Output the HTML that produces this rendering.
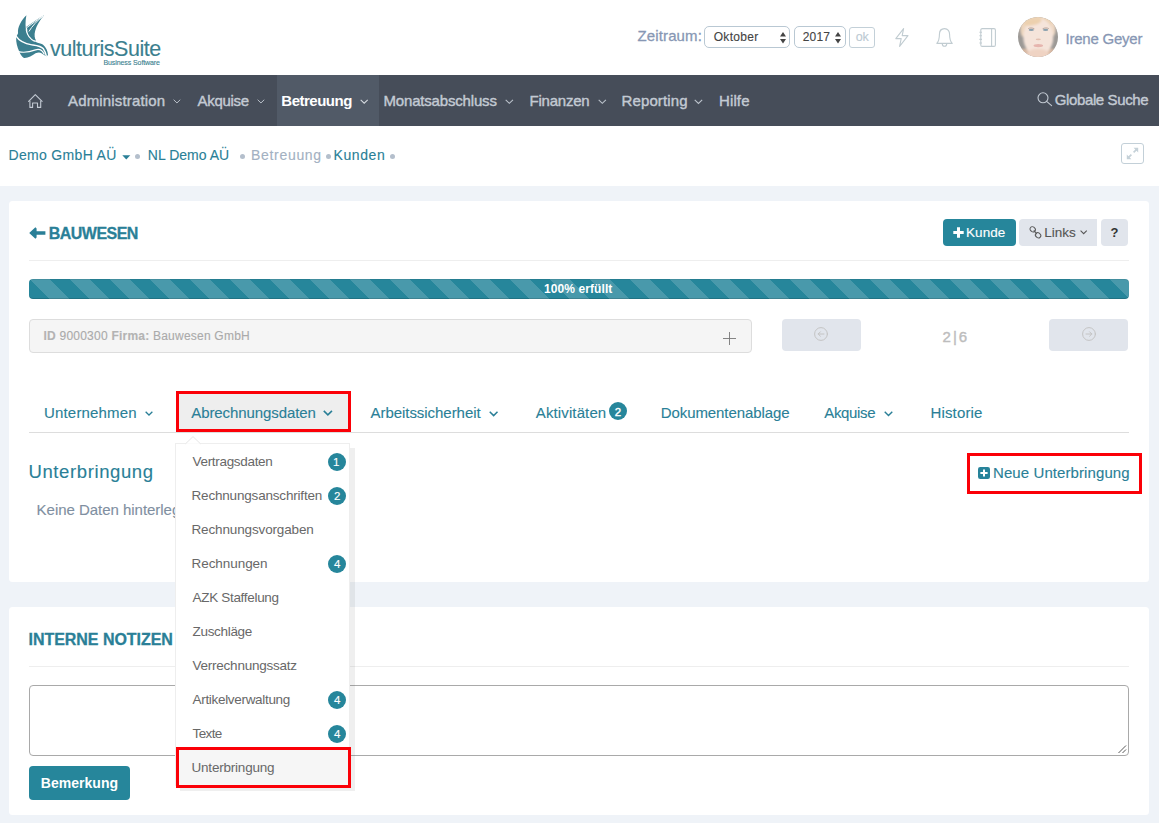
<!DOCTYPE html>
<html lang="de">
<head>
<meta charset="utf-8">
<title>vulturisSuite – Kunden – Bauwesen</title>
<style>
*{box-sizing:border-box;margin:0;padding:0}
html,body{width:1159px;height:823px;overflow:hidden;background:#eff3f8}
body{font-family:"Liberation Sans",sans-serif;position:relative;color:#333}
.abs{position:absolute}
.t{position:absolute;white-space:nowrap;line-height:1;display:block}
.sb{-webkit-text-stroke:0.35px currentColor}
#top{left:0;top:0;width:1159px;height:75px;background:#fff}
#nav{left:0;top:75px;width:1159px;height:51px;background:#464d59}
#navact{left:277px;top:75px;width:102px;height:51px;background:#515a67}
#crumbs{left:0;top:126px;width:1159px;height:60px;background:#fff}
.card{background:#fff;border-radius:3.5px}
#card1{left:9px;top:201px;width:1140px;height:381px}
#card2{left:9px;top:607px;width:1140px;height:208px}
.hr{height:1px;background:#eee;left:29px;width:1100px}
.sel{border:1px solid #b9c8d3;border-radius:5px;background:#fff;height:22px;top:26px}
.btn{border-radius:4px}
.red{border:3px solid #fb0007;position:absolute}
.badge{position:absolute;width:18px;height:18px;border-radius:9px;background:#26869b}
.dot{position:absolute;width:5px;height:5px;border-radius:3px;background:#b4bfcc}
svg{position:absolute;overflow:visible}
</style>
</head>
<body>
<!-- top header -->
<div id="top" class="abs"></div>
<div id="nav" class="abs"></div>
<div id="navact" class="abs"></div>
<div id="crumbs" class="abs"></div>

<!-- logo -->
<svg id="logo" style="left:10px;top:8px" width="60" height="60" viewBox="0 0 823 823">
 <g fill="#3c7f8f">
  <path d="M225,100 C150,175 100,270 111,345 L85,398 C80,470 100,540 125,592 C145,640 165,670 192,686 C250,690 300,650 350,620 C400,598 435,610 462,642 C480,655 498,662 505,660 C512,655 520,648 521,640 C518,590 495,535 450,500 C420,485 385,482 355,466 C300,440 250,395 225,330 C210,270 208,180 225,100 Z"/>
  <path d="M466,98 C400,132 320,190 222,262 C238,275 240,300 236,330 C245,380 270,420 300,436 C320,444 340,448 358,447 C338,415 330,370 345,315 C365,240 415,155 466,98 Z"/>
 </g>
 <g fill="none" stroke="#fff" stroke-linecap="round">
  <path d="M86,388 C125,450 200,487 300,506 C375,516 425,520 458,560 C478,590 490,620 497,652" stroke-width="20"/>
  <path d="M116,598 C200,620 280,600 350,574 C400,558 440,572 468,632" stroke-width="16"/>
  <path d="M232,268 C300,220 370,165 440,118" stroke-width="13"/>
  <path d="M262,318 C300,250 375,175 450,112" stroke-width="13"/>
  <path d="M222,300 C235,370 265,420 335,455" stroke-width="14"/>
 </g>
</svg>

<!-- header controls -->
<div class="abs sel" style="left:704px;width:86px"></div>
<div class="abs sel" style="left:794px;width:52px"></div>
<svg style="left:779.5px;top:31.5px" width="6" height="12" viewBox="0 0 6 12"><path d="M3,0 L6,4.5 H0 Z M0,7 H6 L3,11.5 Z" fill="#444"/></svg>
<svg style="left:835.3px;top:31.5px" width="6" height="12" viewBox="0 0 6 12"><path d="M3,0 L6,4.5 H0 Z M0,7 H6 L3,11.5 Z" fill="#444"/></svg>
<div class="abs" style="left:849px;top:27px;width:26px;height:20.5px;border:1px solid #c3d0d8;border-radius:3px;background:#fff"></div>

<!-- header icons -->
<svg style="left:895px;top:28px" width="14" height="19" viewBox="0 0 14 19" fill="none" stroke="#c1ccd1" stroke-width="1.1" stroke-linejoin="round"><path d="M8.6,0.6 L0.8,10.6 H6.2 L4.6,18.4 L13,7.6 H7.2 Z"/></svg>
<svg style="left:936px;top:28px" width="17" height="19" viewBox="0 0 17 19" fill="none" stroke="#c1ccd1" stroke-width="1.1" stroke-linejoin="round"><path d="M8.5,0.6 C5,0.6 3.4,3.4 3.4,6.4 C3.4,11.5 2.4,13.6 0.8,15.4 H16.2 C14.6,13.6 13.6,11.5 13.6,6.4 C13.6,3.4 12,0.6 8.5,0.6 Z"/><path d="M6.2,15.6 C6.4,17.4 7.3,18.3 8.5,18.3 C9.7,18.3 10.6,17.4 10.8,15.6"/></svg>
<svg style="left:979px;top:28px" width="18" height="19" viewBox="0 0 18 19" fill="none" stroke="#c1ccd1" stroke-width="1.1" stroke-linejoin="round"><rect x="1.8" y="0.6" width="14.6" height="17.8" rx="1.4"/><path d="M12.6,0.6 V18.4"/><path d="M0.4,4.2 H3 M0.4,7.8 H3 M0.4,11.4 H3 M0.4,15 H3"/></svg>

<!-- avatar -->
<svg style="left:1017.8px;top:17px" width="40" height="40" viewBox="0 0 40 40">
 <defs>
  <clipPath id="avc"><circle cx="20" cy="20" r="20"/></clipPath>
  <filter id="avb" x="-30%" y="-30%" width="160%" height="160%"><feGaussianBlur stdDeviation="1.3"/></filter>
  <filter id="avs" x="-50%" y="-50%" width="200%" height="200%"><feGaussianBlur stdDeviation="0.75"/></filter>
 </defs>
 <g clip-path="url(#avc)">
  <rect width="40" height="40" fill="#9c9996"/>
  <g filter="url(#avb)">
   <rect x="-2" y="32" width="44" height="12" fill="#d9b9a3"/>
   <ellipse cx="20" cy="4" rx="17" ry="9" fill="#ecd3b6"/>
   <ellipse cx="5.5" cy="12" rx="3.2" ry="8" fill="#edd5bd"/>
   <ellipse cx="35" cy="12" rx="2.6" ry="7" fill="#eed8c4"/>
   <ellipse cx="20.3" cy="20" rx="15" ry="19" fill="#f5e4da"/>
   <ellipse cx="20" cy="37" rx="11" ry="5" fill="#efd3c3"/>
   <ellipse cx="15" cy="5" rx="9" ry="3.2" fill="#ecd0ae" transform="rotate(-14 15 5)"/>
  </g>
  <g filter="url(#avs)">
   <ellipse cx="13.3" cy="12.9" rx="2.6" ry="1.05" fill="#8ba1ae"/>
   <ellipse cx="27.6" cy="12.9" rx="2.6" ry="1.05" fill="#8ba1ae"/>
   <path d="M10.2,11.6 C12,10.6 14.6,10.7 16.4,11.8" stroke="#a58f85" stroke-width="0.7" fill="none"/>
   <path d="M24.6,11.8 C26.4,10.7 29,10.6 30.8,11.6" stroke="#a58f85" stroke-width="0.7" fill="none"/>
   <ellipse cx="20.3" cy="28.6" rx="4.8" ry="1.6" fill="#e6b5ae"/>
   <ellipse cx="20.3" cy="22.3" rx="2.6" ry="0.9" fill="#e3c0b1"/>
  </g>
 </g>
</svg>

<!-- nav icons -->
<svg style="left:28px;top:93px" width="15" height="16" viewBox="28 93 15 16" fill="none" stroke="#c2c9d2" stroke-width="1.1" stroke-linecap="round" stroke-linejoin="round"><path d="M28.6,101.4 L35.3,94.6 L42.1,101.4"/><path d="M29.9,101 V107.4 H32.6 V103 H37.5 V107.4 H40.7 V101"/></svg>
<svg style="left:1037px;top:92px" width="16" height="15" viewBox="0 0 16 15" fill="none" stroke="#c2c9d2" stroke-width="1.1" stroke-linecap="round"><circle cx="6" cy="5.8" r="5"/><path d="M9.6,9.4 L14.6,13.6"/></svg>
<svg style="left:173.30px;top:98.93px" width="7.90" height="4.74" viewBox="0 0 10 6"><path d="M0.8,0.9 L5,5 L9.2,0.9" fill="none" stroke="#bcc3cc" stroke-width="1.25"/></svg>
<svg style="left:257.30px;top:98.93px" width="7.90" height="4.74" viewBox="0 0 10 6"><path d="M0.8,0.9 L5,5 L9.2,0.9" fill="none" stroke="#bcc3cc" stroke-width="1.25"/></svg>
<svg style="left:359.80px;top:98.78px" width="8.40" height="5.04" viewBox="0 0 10 6"><path d="M0.8,0.9 L5,5 L9.2,0.9" fill="none" stroke="#d5dae0" stroke-width="1.25"/></svg>
<svg style="left:505.30px;top:98.70px" width="8.65" height="5.19" viewBox="0 0 10 6"><path d="M0.8,0.9 L5,5 L9.2,0.9" fill="none" stroke="#bcc3cc" stroke-width="1.25"/></svg>
<svg style="left:597.50px;top:98.72px" width="8.60" height="5.16" viewBox="0 0 10 6"><path d="M0.8,0.9 L5,5 L9.2,0.9" fill="none" stroke="#bcc3cc" stroke-width="1.25"/></svg>
<svg style="left:694.30px;top:98.63px" width="8.90" height="5.34" viewBox="0 0 10 6"><path d="M0.8,0.9 L5,5 L9.2,0.9" fill="none" stroke="#bcc3cc" stroke-width="1.25"/></svg>

<!-- breadcrumbs -->
<svg style="left:121.8px;top:155px" width="9" height="5" viewBox="0 0 9 5"><path d="M0.3,0.3 H8.3 L4.3,4.4 Z" fill="#2a7f97"/></svg>
<div class="dot" style="left:135.3px;top:154.3px"></div>
<div class="dot" style="left:239.8px;top:154.3px"></div>
<div class="dot" style="left:325.8px;top:154.3px"></div>
<div class="dot" style="left:389.8px;top:154.3px"></div>
<div class="abs" style="left:1121px;top:143px;width:23px;height:21px;border:1px solid #c3d0d8;border-radius:3px;background:#fff"></div>
<svg style="left:1126px;top:147px" width="13" height="13" viewBox="0 0 13 13" fill="#c5d1d8"><path d="M7.6,0.8 H12.2 V5.4 L10.5,3.7 L8.2,6 L7,4.8 L9.3,2.5 Z"/><path d="M5.4,12.2 H0.8 V7.6 L2.5,9.3 L4.8,7 L6,8.2 L3.7,10.5 Z"/></svg>

<!-- card 1 -->
<div id="card1" class="abs card"></div>
<svg style="left:28.6px;top:227px" width="17" height="12" viewBox="0 0 17 12"><path d="M0.2,6 L6.4,0.2 L7.6,1.4 V4.2 H16.4 V7.8 H7.6 V10.6 L6.4,11.8 Z" fill="#2a7f97"/></svg>
<div class="abs hr" style="top:260px"></div>
<div class="abs btn" style="left:943px;top:219px;width:73px;height:27px;background:#26869b"></div>
<div class="abs btn" style="left:1019px;top:219px;width:78px;height:27px;background:#e1e5ec;border-radius:4px 0 0 4px"></div>
<div class="abs btn" style="left:1101px;top:219px;width:27px;height:27px;background:#e1e5ec"></div>
<svg style="left:952.6px;top:227px" width="11" height="11" viewBox="0 0 11 11"><path d="M4,0.3 H7 V4 H10.7 V7 H7 V10.7 H4 V7 H0.3 V4 H4 Z" fill="#fff"/></svg>
<svg style="left:1029px;top:226px" width="13" height="13" viewBox="0 0 13 13" fill="none" stroke="#5a5a5a" stroke-width="1.05"><rect x="0.9" y="1" width="5.6" height="4.6" rx="2.3" transform="rotate(40 3.7 3.3)"/><rect x="6.3" y="7" width="5.6" height="4.6" rx="2.3" transform="rotate(40 9.1 9.3)"/><path d="M4.8,4.4 L8,8.2"/></svg>

<svg style="left:1079.95px;top:230.29px" width="7.35" height="4.41" viewBox="0 0 10 6"><path d="M0.8,0.9 L5,5 L9.2,0.9" fill="none" stroke="#555" stroke-width="1.4"/></svg>

<!-- progress -->
<div class="abs" style="left:29px;top:279px;width:1100px;height:20px;border-radius:4px;background-color:#26869b;background-image:linear-gradient(45deg,rgba(255,255,255,.16) 25%,transparent 25%,transparent 50%,rgba(255,255,255,.16) 50%,rgba(255,255,255,.16) 75%,transparent 75%,transparent);background-size:40px 40px;background-position:1px 0;box-shadow:inset 0 -1px 0 rgba(0,0,0,.15),inset 0 1px 0 rgba(0,0,0,.07)"></div>

<!-- id row -->
<div class="abs" style="left:29px;top:319px;width:723px;height:33.5px;background:#f5f5f5;border:1px solid #ddd;border-radius:4px"></div>
<svg style="left:723px;top:331.5px" width="13" height="13" viewBox="0 0 13 13"><path d="M6.5,0 V13 M0,6.5 H13" stroke="#777" stroke-width="0.9" fill="none"/></svg>
<div class="abs btn" style="left:782px;top:319px;width:79px;height:31.5px;background:#e1e5ec"></div>
<div class="abs btn" style="left:1049px;top:319px;width:79px;height:31.5px;background:#e1e5ec"></div>
<svg style="left:814.2px;top:326.7px" width="14" height="14" viewBox="0 0 14 14" fill="none" stroke="#c4c4c4" stroke-width="1" stroke-linecap="round" stroke-linejoin="round"><circle cx="7" cy="7" r="6.4"/><path d="M10,7 H4.2 M6.4,4.8 L4.2,7 L6.4,9.2"/></svg>
<svg style="left:1081.7px;top:326.7px" width="14" height="14" viewBox="0 0 14 14" fill="none" stroke="#c4c4c4" stroke-width="1" stroke-linecap="round" stroke-linejoin="round"><circle cx="7" cy="7" r="6.4"/><path d="M4,7 H9.8 M7.6,4.8 L9.8,7 L7.6,9.2"/></svg>

<!-- tabs -->
<div class="abs" style="left:29px;top:432px;width:1100px;height:1px;background:#ddd"></div>
<div class="abs" style="left:179px;top:394px;width:169px;height:38px;background:#eee"></div>
<svg style="left:144.50px;top:410.90px" width="8.00" height="4.80" viewBox="0 0 10 6"><path d="M0.8,0.9 L5,5 L9.2,0.9" fill="none" stroke="#2a7f97" stroke-width="1.6"/></svg>
<svg style="left:323.25px;top:410.38px" width="9.75" height="5.85" viewBox="0 0 10 6"><path d="M0.8,0.9 L5,5 L9.2,0.9" fill="none" stroke="#2a7f97" stroke-width="1.6"/></svg>
<svg style="left:488.75px;top:410.53px" width="9.25" height="5.55" viewBox="0 0 10 6"><path d="M0.8,0.9 L5,5 L9.2,0.9" fill="none" stroke="#2a7f97" stroke-width="1.6"/></svg>
<svg style="left:883.50px;top:410.60px" width="9.00" height="5.40" viewBox="0 0 10 6"><path d="M0.8,0.9 L5,5 L9.2,0.9" fill="none" stroke="#2a7f97" stroke-width="1.6"/></svg>
<div class="badge" style="left:608.8px;top:402.3px"></div>

<!-- plus-square -->
<svg style="left:978.2px;top:467.4px" width="12" height="12" viewBox="0 0 12 12"><rect width="12" height="12" rx="2.2" fill="#27839a"/><path d="M5,2.4 H7 V5 H9.6 V7 H7 V9.6 H5 V7 H2.4 V5 H5 Z" fill="#fff"/></svg>

<!-- card 2 -->
<div id="card2" class="abs card"></div>
<div class="abs hr" style="top:666px"></div>
<div class="abs" style="left:29px;top:685px;width:1100px;height:71px;border:1px solid #a9a9a9;border-radius:4px;background:#fff"></div>
<svg style="left:1118px;top:745px" width="9" height="9" viewBox="0 0 9 9"><path d="M0.5,8 L8,0.5 M4.5,8 L8,4.5" stroke="#444" stroke-width="0.9"/></svg>
<div class="abs btn" style="left:29px;top:766px;width:101px;height:34px;background:#26869b"></div>

<!-- base texts -->
<span class="t" style="left:50.00px;top:38.50px;font-size:21.5px;color:#3c7f8f;letter-spacing:-0.500px;-webkit-text-stroke:0.12px currentColor">vulturisSuite</span>
<span class="t" style="left:103.50px;top:58.80px;font-size:7px;color:#3c7f8f;letter-spacing:-0.094px;-webkit-text-stroke:0.12px currentColor">Business Software</span>
<span class="t" style="left:637.50px;top:28.00px;font-size:15px;color:#8797b4;letter-spacing:0.125px;-webkit-text-stroke:0.28px currentColor">Zeitraum:</span>
<span class="t" style="left:713.70px;top:30.80px;font-size:12px;color:#444;letter-spacing:0.333px;-webkit-text-stroke:0.12px currentColor">Oktober</span>
<span class="t" style="left:802.80px;top:30.80px;font-size:12px;color:#444;letter-spacing:0.133px;-webkit-text-stroke:0.12px currentColor">2017</span>
<span class="t" style="left:855.70px;top:31.00px;font-size:12.5px;color:#bccad3;letter-spacing:-0.200px;-webkit-text-stroke:0.12px currentColor">ok</span>
<span class="t" style="left:1065.50px;top:31.25px;font-size:15px;color:#8797b4;letter-spacing:-0.225px;-webkit-text-stroke:0.28px currentColor">Irene Geyer</span>
<span class="t" style="left:68.00px;top:93.25px;font-size:15px;color:#c3cad3;letter-spacing:0.154px;-webkit-text-stroke:0.4px currentColor">Administration</span>
<span class="t" style="left:197.50px;top:93.25px;font-size:15px;color:#c3cad3;letter-spacing:-0.292px;-webkit-text-stroke:0.4px currentColor">Akquise</span>
<span class="t" style="left:281.30px;top:93.25px;font-size:15px;color:#fff;letter-spacing:-0.500px;font-weight:700">Betreuung</span>
<span class="t" style="left:383.50px;top:93.25px;font-size:15px;color:#c3cad3;letter-spacing:-0.179px;-webkit-text-stroke:0.4px currentColor">Monatsabschluss</span>
<span class="t" style="left:529.50px;top:93.25px;font-size:15px;color:#c3cad3;letter-spacing:-0.214px;-webkit-text-stroke:0.4px currentColor">Finanzen</span>
<span class="t" style="left:621.50px;top:93.25px;font-size:15px;color:#c3cad3;letter-spacing:0.125px;-webkit-text-stroke:0.4px currentColor">Reporting</span>
<span class="t" style="left:719.00px;top:93.25px;font-size:15px;color:#c3cad3;letter-spacing:0.125px;-webkit-text-stroke:0.4px currentColor">Hilfe</span>
<span class="t" style="left:1054.75px;top:92.00px;font-size:15px;color:#c3cad3;letter-spacing:-0.375px;-webkit-text-stroke:0.4px currentColor">Globale Suche</span>
<span class="t" style="left:8.60px;top:147.50px;font-size:14px;color:#2a7f97;letter-spacing:0.309px;-webkit-text-stroke:0.12px currentColor">Demo GmbH AÜ</span>
<span class="t" style="left:147.80px;top:147.50px;font-size:14px;color:#2a7f97;letter-spacing:0.022px;-webkit-text-stroke:0.12px currentColor">NL Demo AÜ</span>
<span class="t" style="left:251.00px;top:147.50px;font-size:14px;color:#a3b1c2;letter-spacing:0.688px;-webkit-text-stroke:0.12px currentColor">Betreuung</span>
<span class="t" style="left:333.50px;top:147.50px;font-size:14px;color:#2a7f97;letter-spacing:0.600px;-webkit-text-stroke:0.12px currentColor">Kunden</span>
<span class="t" style="left:48.80px;top:226.00px;font-size:16px;color:#2a7f97;letter-spacing:-0.543px;font-weight:700;-webkit-text-stroke:0.3px currentColor">BAUWESEN</span>
<span class="t" style="left:966.00px;top:225.75px;font-size:13.5px;color:#fff;letter-spacing:0.062px;-webkit-text-stroke:0.12px currentColor">Kunde</span>
<span class="t" style="left:1044.25px;top:225.75px;font-size:13.5px;color:#555;letter-spacing:0.000px;-webkit-text-stroke:0.12px currentColor">Links</span>
<span class="t" style="left:1110.50px;top:225.75px;font-size:13px;color:#333;letter-spacing:0.000px;font-weight:700">?</span>
<span class="t" style="left:544.00px;top:283.00px;font-size:12px;color:#fff;letter-spacing:0.091px;font-weight:700">100% erfüllt</span>
<span class="t" style="left:43.50px;top:330.00px;font-size:12px;color:#aaa;letter-spacing:0.225px;-webkit-text-stroke:0.12px currentColor"><b style="color:#b3b3b3">ID</b> 9000300 <b style="color:#b3b3b3">Firma:</b> Bauwesen GmbH</span>
<span class="t" style="left:942.60px;top:328.75px;font-size:15px;color:#bdbdbd;letter-spacing:2.000px;-webkit-text-stroke:0.4px currentColor">2|6</span>
<span class="t" style="left:44.00px;top:405.00px;font-size:15px;color:#2a7f97;letter-spacing:0.175px;-webkit-text-stroke:0.12px currentColor">Unternehmen</span>
<span class="t" style="left:191.25px;top:405.00px;font-size:15px;color:#2a7f97;letter-spacing:-0.083px;-webkit-text-stroke:0.12px currentColor">Abrechnungsdaten</span>
<span class="t" style="left:370.50px;top:405.00px;font-size:15px;color:#2a7f97;letter-spacing:-0.047px;-webkit-text-stroke:0.12px currentColor">Arbeitssicherheit</span>
<span class="t" style="left:535.75px;top:405.00px;font-size:15px;color:#2a7f97;letter-spacing:0.125px;-webkit-text-stroke:0.12px currentColor">Aktivitäten</span>
<span class="t" style="left:614.80px;top:406.60px;font-size:11.5px;color:#fff;letter-spacing:0.000px;-webkit-text-stroke:0.4px currentColor">2</span>
<span class="t" style="left:660.75px;top:405.00px;font-size:15px;color:#2a7f97;letter-spacing:-0.083px;-webkit-text-stroke:0.12px currentColor">Dokumentenablage</span>
<span class="t" style="left:824.25px;top:405.00px;font-size:15px;color:#2a7f97;letter-spacing:-0.333px;-webkit-text-stroke:0.12px currentColor">Akquise</span>
<span class="t" style="left:930.50px;top:405.00px;font-size:15px;color:#2a7f97;letter-spacing:0.143px;-webkit-text-stroke:0.12px currentColor">Historie</span>
<span class="t" style="left:28.50px;top:463.30px;font-size:18.5px;color:#2a7f97;letter-spacing:0.604px;-webkit-text-stroke:0.12px currentColor">Unterbringung</span>
<span class="t" style="left:36.60px;top:502.00px;font-size:15px;color:#7f8fa1;letter-spacing:-0.029px;-webkit-text-stroke:0.12px currentColor">Keine Daten hinterlegt</span>
<span class="t" style="left:993.00px;top:464.50px;font-size:15px;color:#2a7f97;letter-spacing:0.088px;-webkit-text-stroke:0.12px currentColor">Neue Unterbringung</span>
<span class="t" style="left:28.50px;top:632.00px;font-size:16px;color:#2a7f97;letter-spacing:-0.036px;font-weight:700;-webkit-text-stroke:0.3px currentColor">INTERNE NOTIZEN</span>
<span class="t" style="left:40.75px;top:775.75px;font-size:14px;color:#fff;letter-spacing:0.031px;font-weight:700">Bemerkung</span>

<!-- dropdown -->
<div class="abs" style="left:175px;top:443px;width:174.5px;height:342.5px;background:#fff;border:1px solid #eee;box-shadow:5px 5px 0 rgba(102,102,102,.1)"></div>
<svg style="left:185px;top:436px" width="16" height="8" viewBox="0 0 16 8"><path d="M0.5,7.8 L8,0.6 L15.5,7.8" fill="#fff" stroke="#e6e6e6" stroke-width="1"/></svg>
<div class="abs" style="left:179px;top:750px;width:169px;height:35px;background:#f6f6f6"></div>
<div class="badge" style="left:328px;top:453.0px"></div>
<div class="badge" style="left:328px;top:487.0px"></div>
<div class="badge" style="left:328px;top:555.0px"></div>
<div class="badge" style="left:328px;top:691.0px"></div>
<div class="badge" style="left:328px;top:725.0px"></div>
<span class="t" style="left:192.50px;top:454.50px;font-size:13.5px;color:#686868;letter-spacing:-0.312px">Vertragsdaten</span>
<span class="t" style="left:333.00px;top:457.20px;font-size:11.5px;color:#fff;letter-spacing:0.000px;-webkit-text-stroke:0.12px currentColor">1</span>
<span class="t" style="left:191.50px;top:488.50px;font-size:13.5px;color:#686868;letter-spacing:-0.184px">Rechnungsanschriften</span>
<span class="t" style="left:334.00px;top:491.20px;font-size:11.5px;color:#fff;letter-spacing:0.000px;-webkit-text-stroke:0.12px currentColor">2</span>
<span class="t" style="left:191.50px;top:522.50px;font-size:13.5px;color:#686868;letter-spacing:-0.141px">Rechnungsvorgaben</span>
<span class="t" style="left:191.50px;top:556.50px;font-size:13.5px;color:#686868;letter-spacing:-0.056px">Rechnungen</span>
<span class="t" style="left:334.00px;top:559.20px;font-size:11.5px;color:#fff;letter-spacing:0.000px;-webkit-text-stroke:0.12px currentColor">4</span>
<span class="t" style="left:192.50px;top:590.50px;font-size:13.5px;color:#686868;letter-spacing:-0.308px">AZK Staffelung</span>
<span class="t" style="left:192.50px;top:624.50px;font-size:13.5px;color:#686868;letter-spacing:-0.312px">Zuschläge</span>
<span class="t" style="left:192.50px;top:658.50px;font-size:13.5px;color:#686868;letter-spacing:-0.233px">Verrechnungssatz</span>
<span class="t" style="left:192.50px;top:692.50px;font-size:13.5px;color:#686868;letter-spacing:-0.312px">Artikelverwaltung</span>
<span class="t" style="left:334.00px;top:695.20px;font-size:11.5px;color:#fff;letter-spacing:0.000px;-webkit-text-stroke:0.12px currentColor">4</span>
<span class="t" style="left:192.50px;top:726.50px;font-size:13.5px;color:#686868;letter-spacing:-0.625px">Texte</span>
<span class="t" style="left:334.00px;top:729.20px;font-size:11.5px;color:#fff;letter-spacing:0.000px;-webkit-text-stroke:0.12px currentColor">4</span>
<span class="t" style="left:191.50px;top:760.50px;font-size:13.5px;color:#686868;letter-spacing:-0.208px">Unterbringung</span>

<!-- red highlight boxes -->
<div class="red" style="left:176px;top:391px;width:175px;height:41px"></div>
<div class="red" style="left:967px;top:453px;width:174.5px;height:41px"></div>
<div class="red" style="left:176px;top:747px;width:175px;height:41px"></div>
</body>
</html>
